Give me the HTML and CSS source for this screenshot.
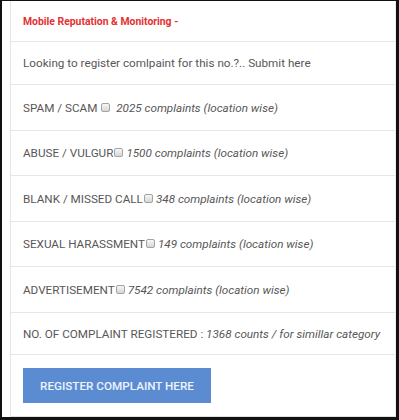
FILE: index.html
```html
<!DOCTYPE html>
<html>
<head>
<meta charset="utf-8">
<link rel="stylesheet" href="styles.css">
</head>
<body>
<div class="frame">
  <div class="panel">
    <div class="row row-title"><span class="title">Mobile Reputation &amp; Monitoring -</span></div>
    <div class="row row-intro"><span>Looking to register comlpaint for this no.?.. Submit here</span></div>
    <div class="row"><span>SPAM / SCAM <span class="cb"></span> <em>2025 complaints (location wise)</em></span></div>
    <div class="row"><span>ABUSE / VULGUR<span class="cb"></span><em>1500 complaints (location wise)</em></span></div>
    <div class="row"><span>BLANK / MISSED CALL<span class="cb"></span><em>348 complaints (location wise)</em></span></div>
    <div class="row"><span>SEXUAL HARASSMENT<span class="cb"></span><em>149 complaints (location wise)</em></span></div>
    <div class="row"><span>ADVERTISEMENT<span class="cb"></span><em>7542 complaints (location wise)</em></span></div>
    <div class="row row-total"><span>NO. OF COMPLAINT REGISTERED : <em>1368 counts / for simillar category</em></span></div>
    <div class="actions"><button class="btn">REGISTER COMPLAINT HERE</button></div>
  </div>
</div>
</body>
</html>
```
FILE: styles.css
```css
html, body { margin: 0; padding: 0; background: #fff; }
.frame {
  width: 399px; height: 420px; box-sizing: border-box;
  border-style: solid; border-color: #111;
  border-width: 1px 3px 3px 2px;
  padding-left: 8px;
  overflow: hidden;
  font-family: Roboto, "Liberation Sans", sans-serif;
  color: #575757;
}
.panel {
  border-left: 1px solid #e4e4e4;
  border-right: 1px solid #ededed;
  border-bottom: 1px solid #e0e0e0;
  height: 416px; box-sizing: border-box;
}
.row {
  height: 46px; box-sizing: border-box;
  border-bottom: 1px solid #e6e6e6;
  display: flex; align-items: center;
  padding-left: 12px;
  font-size: 11.7px;
  white-space: nowrap;
}
.row:nth-child(4), .row:nth-child(6) { height: 45px; }
.row-title { height: 41px; }
.row-intro { height: 43px; }
.row-total { height: 42px; }
.title { color: #e43131; font-weight: 700; font-size: 10.4px; }
em { font-style: italic; }
.cb {
  display: inline-block; width: 7px; height: 7px;
  border: 1px solid #a3a3a3; border-radius: 2px;
  background: linear-gradient(#f6f6f6, #d6d6d6);
  margin: 0 3px 0 1px;
  vertical-align: 0;
}
.actions { padding: 13px 0 0 12px; }
.btn {
  display: block;
  background: #5b8cd2; color: #eef3fb; border: none;
  width: 188px; height: 35px;
  font-family: Roboto, "Liberation Sans", sans-serif;
  font-size: 11.7px; font-weight: 500; padding: 0;
}
```
